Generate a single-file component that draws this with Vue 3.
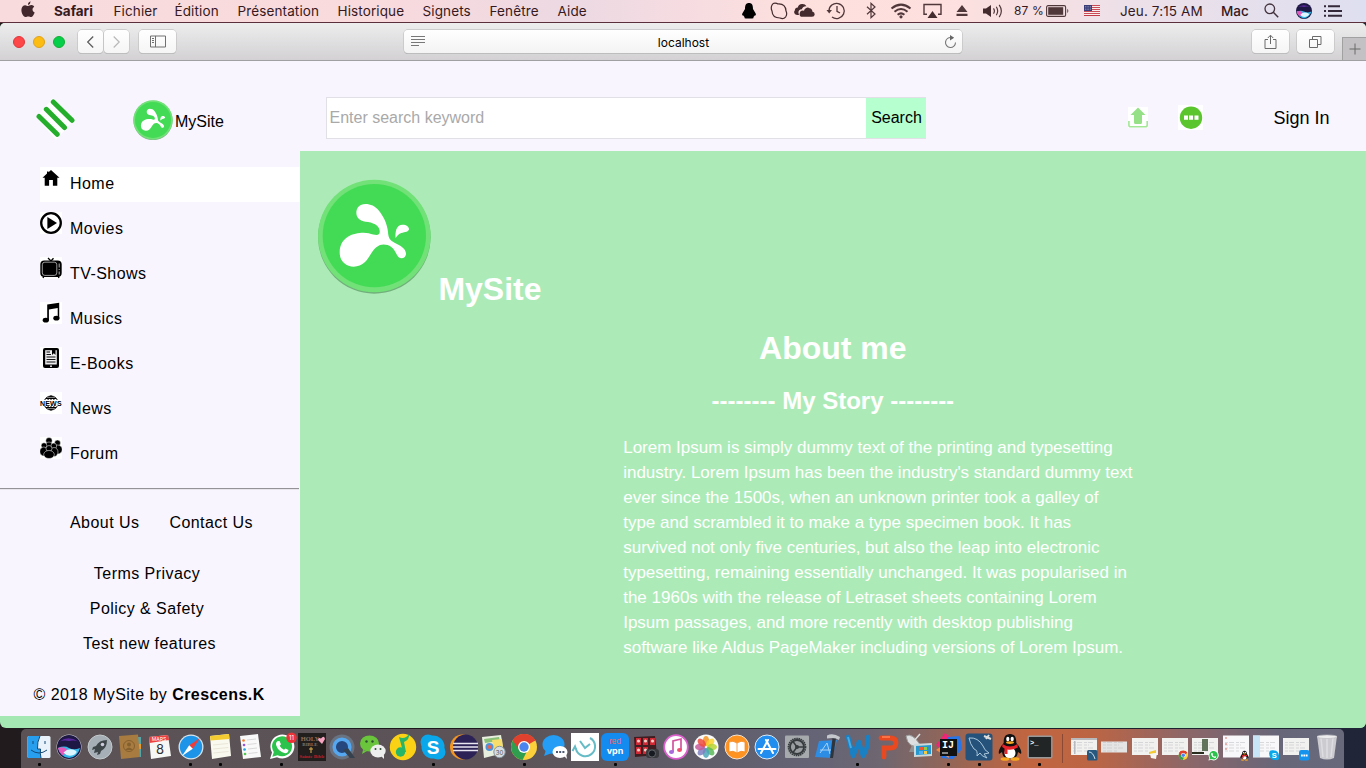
<script setup>
const menus = [
  ['Fichier', 61], ['Édition', 63], ['Présentation', 100], ['Historique', 85],
  ['Signets', 67], ['Fenêtre', 68], ['Aide', 40]
]
const links = ['Home', 'Movies', 'TV-Shows', 'Musics', 'E-Books', 'News', 'Forum']
const story = [
  'Lorem Ipsum is simply dummy text of the printing and typesetting',
  "industry. Lorem Ipsum has been the industry's standard dummy text",
  'ever since the 1500s, when an unknown printer took a galley of',
  'type and scrambled it to make a type specimen book. It has',
  'survived not only five centuries, but also the leap into electronic',
  'typesetting, remaining essentially unchanged. It was popularised in',
  'the 1960s with the release of Letraset sheets containing Lorem',
  'Ipsum passages, and more recently with desktop publishing',
  'software like Aldus PageMaker including versions of Lorem Ipsum.'
]
const petals = ['#f7941e', '#fbd12c', '#b6d433', '#58b958', '#4aa6b8', '#7d7fc0', '#c65a9b', '#ee4b3e']
</script>

<template>
  <div class="desktop">
    <svg class="defs" width="0" height="0">
      <symbol id="splash" viewBox="50 88 344 346">
        <circle cx="222" cy="263" r="169" fill="#5e9a68" opacity=".75" />
        <circle cx="222" cy="259" r="169" fill="#71e178" />
        <circle cx="222" cy="258" r="155" fill="#43db55" />
        <path fill="#fff" d="M195 163C178 163 168 175 168 189C168 208 183 215 203 217C228 221 240 234 238 248C237 259 226 257 205 251C180 246 118 252 118 309C118 336 138 351 160 351C187 351 200 333 211 314C226 289 240 280 262 286C284 294 285 312 295 323C303 330 318 325 317 311C315 295 300 288 284 280C266 270 264 262 263 246C260 220 248 198 236 183C224 169 211 163 195 163Z" />
        <path fill="#fff" d="M286 266C284 248 287 225 307 225C318 225 326 231 326 238C326 246 314 247 303 250C293 254 289 260 286 266Z" />
      </symbol>
      <symbol id="chrome" viewBox="0 0 26 26">
        <circle cx="13" cy="13" r="13" fill="#fbd03b" />
        <path d="M13 13L1.7 6.6A13 13 0 0 1 24.3 6.6Z" fill="#e0412f" />
        <path d="M13 13L1.7 6.6A13 13 0 0 0 11.6 25.9L17 15Z" fill="#2f9e4f" />
        <path d="M13 7H24.5A13 13 0 0 0 1.7 6.6L7.5 15Z" fill="#e0412f" />
        <circle cx="13" cy="13" r="6" fill="#fff" /><circle cx="13" cy="13" r="4.7" fill="#4a84ee" />
      </symbol>
      <symbol id="penguin" viewBox="0 0 24 28">
        <path d="M12 1C7 1 5.5 5 5.7 10C2 14 0 18 1 21L4 19C5 25 8 26 12 26S19 25 20 19L23 21C24 18 22 14 18.3 10C18.5 5 17 1 12 1Z" fill="#111" />
        <ellipse cx="12" cy="20" rx="5.5" ry="5.5" fill="#fff" /><ellipse cx="9.8" cy="6" rx="1.6" ry="2.2" fill="#fff" /><ellipse cx="14.2" cy="6" rx="1.6" ry="2.2" fill="#fff" />
        <ellipse cx="12" cy="9.6" rx="4" ry="1.4" fill="#f5a623" /><path d="M4.5 11Q12 16 19.5 11L19.8 14.5Q14 17.5 9.5 16.5V21H6.5V15.6L4.2 14Z" fill="#e8242b" />
        <ellipse cx="7" cy="26" rx="4.5" ry="1.8" fill="#f5a623" /><ellipse cx="17" cy="26" rx="4.5" ry="1.8" fill="#f5a623" />
      </symbol>
      <symbol id="siri" viewBox="0 0 26 26">
        <circle cx="13" cy="13" r="13" fill="#1d1844" />
        <path d="M3 7Q12 0 23 7Q18 5 13 6.5Q8 5 3 7Z" fill="#5b2a9e" />
        <path d="M1 14Q8 11 13 14T25 14Q22 24 13 25Q4 24 1 14Z" fill="#33b7e8" />
        <path d="M1 14Q7 12 10 15T6 22Q2 19 1 14Z" fill="#e557ba" />
        <path d="M7 19Q12 14 18 16T19 21Q12 25 7 19Z" fill="#dcf6ff" />
      </symbol>
      <symbol id="whats" viewBox="0 0 26 26">
        <path d="M1 25L3 18.5A12 12 0 1 1 8 23.2Z" fill="#fff" /><path d="M3.3 22.7L4.8 18A10 10 0 1 1 8.6 21.3Z" fill="#2bc34b" />
        <path d="M8.2 7.2L10.5 7L12 10.2L10.7 11.7Q12 14.5 15 15.8L16.5 14.4L19.5 16Q19 19.3 16 19.2Q9 17.8 7 10.8Q6.5 8.7 8.2 7.2Z" fill="#fff" />
      </symbol>
      <symbol id="skype" viewBox="0 0 26 26">
        <circle cx="8" cy="8" r="7.5" fill="#0aa7ea" /><circle cx="18" cy="18" r="7.5" fill="#0aa7ea" /><circle cx="13" cy="13" r="11.5" fill="#0aa7ea" />
      </symbol>
    </svg>

    <header class="menubar">
      <svg class="apple" width="14" height="17" viewBox="0 0 14 17"><path d="M9.6.3Q9.7 3 7 4Q6.7 1.4 9.6.3ZM7 5C8 5 9 4 10.5 4.1C11.8 4.2 12.7 4.8 13.2 5.7C10.8 7.2 11 10.3 13.7 11.4C12.7 14 11.4 16 10.2 16C9 16 8.5 15.4 7.3 15.4S5.5 16 4.4 16C2.3 16 .3 12 .4 8.8C.5 6 2.2 4.2 4.2 4.2C5.5 4.2 6.2 5 7 5Z" fill="#42282c" /></svg>
      <b class="app-name">Safari</b>
      <span v-for="m in menus" :key="m[0]" class="menu" :style="{ width: m[1] + 'px' }">{{ m[0] }}</span>
      <div class="status">
        <svg width="16" height="17" viewBox="0 0 16 17"><path d="M8 1C5 1 4 3 4 7L1.3 11.5Q.5 14 2.3 13.5L3.5 15Q3 16.5 5 16.5H11Q13 16.5 12.5 15L13.7 13.5Q15.5 14 14.7 11.5L12 7C12 3 11 1 8 1Z" fill="#000" /></svg>
        <svg class="s-skype" width="18" height="18" viewBox="0 0 18 18"><path d="M5 1.2Q7 1.2 8 2Q15.4 1.5 16 9Q17.5 12 15.7 14.8Q13.5 17.5 10 16Q2.3 16 2 9Q.5 6 2 3Q3 1.2 5 1.2Z" fill="none" stroke="#442b2e" stroke-width="1.2" /></svg>
        <svg class="s-cloud" width="21" height="15" viewBox="0 0 21 15"><path d="M3 12H5L4.4 9.5Q4.4 6.5 7.8 6.2Q9 3 12.5 3.3Q11 .7 8 1Q4.5 1.2 3.8 4.5Q1 4.5.8 7.6Q0 8.2.2 9.8Q.5 11.6 3 12ZM7.2 13.8H18Q20.5 13.5 20.7 11.4Q20.7 9 18.5 8.7Q18 5.5 15.6 5.3Q13.8 4 11.8 5.2Q10.3 6 10 7.7Q6.4 7 5.8 9.8Q5 13 7.2 13.8Z" fill="#442b2e" /></svg>
        <svg class="s-time" width="20" height="18" viewBox="0 0 20 18"><path d="M3 9A7.6 7.6 0 1 1 6 15M11 4V9.3L14 11" fill="none" stroke="#50373a" stroke-width="1.3" /><path d="M.5 8H6L3.2 11.5Z" fill="#50373a" /></svg>
        <svg class="s-bt" width="12" height="17" viewBox="0 0 12 17"><path d="M2 4.8L10 12L6 15.7V1.3L10 5L2 12.2" fill="none" stroke="#50373a" stroke-width="1.2" /></svg>
        <svg class="s-wifi" width="22" height="16" viewBox="0 0 22 16"><path d="M1.5 5.5Q11-2.3 20.5 5.5M4.5 8.7Q11 3.4 17.5 8.7M7.6 11.8Q11 9 14.4 11.8" fill="none" stroke="#50373a" stroke-width="2" /><circle cx="11" cy="13.8" r="1.6" fill="#50373a" /></svg>
        <svg class="s-air" width="19" height="16" viewBox="0 0 19 16"><path d="M4 11.3H1V1.5H18V11.3H15" fill="none" stroke="#50373a" stroke-width="1.4" /><path d="M9.5 8L14.5 15H4.5Z" fill="#442b2e" /></svg>
        <svg class="s-eject" width="12" height="12" viewBox="0 0 12 12"><path d="M6 0L11.5 7H.5ZM.5 8.8H11.5V11H.5Z" fill="#50373a" /></svg>
        <svg class="s-vol" width="22" height="16" viewBox="0 0 22 16"><path d="M1 5.5H4L9 2V14L4 10.5H1Z" fill="#442b2e" /><path d="M11.5 5.4Q13.3 8 11.5 10.6M14.3 3.7Q17 8 14.3 12.3M17.2 1.8Q21.5 8 17.2 14.2" fill="none" stroke="#50373a" stroke-width="1.2" /></svg>
        <span class="pct">87 %</span>
        <svg class="s-bat" width="24" height="12" viewBox="0 0 24 12"><rect x=".6" y=".6" width="19" height="10.8" rx="1.5" fill="none" stroke="#50373a" stroke-width="1.1" /><rect x="2.2" y="2.2" width="15" height="7.6" fill="#50373a" /><path d="M21.3 3.8Q23.3 6 21.3 8.2Z" fill="#50373a" /></svg>
        <svg class="s-flag" width="16" height="11" viewBox="0 0 16 11"><path fill="#fff" d="M0 0h16v11H0z" /><path d="M0 .6H16M0 2.6H16M0 4.6H16M0 6.6H16M0 8.6H16M0 10.5H16" stroke="#c33945" /><path fill="#3a3d78" d="M0 0h8v6H0z" /><path d="M1 1.5H7M1 3H7M1 4.5H7" stroke="#b9bad5" stroke-width=".6" stroke-dasharray=".8 .9" /></svg>
        <span class="clock">Jeu. 7:15 AM</span>
        <span class="user">Mac</span>
        <svg class="s-find" width="15" height="15" viewBox="0 0 15 15"><circle cx="5.8" cy="5.8" r="4.8" fill="none" stroke="#42333e" stroke-width="1.3" /><path d="M9.3 9.3L14.2 14.2" stroke="#42333e" stroke-width="1.5" /></svg>
        <svg class="s-siri" width="16" height="16"><use href="#siri" /></svg>
        <svg class="s-list" width="18" height="12" viewBox="0 0 18 12"><path d="M0 1.3H2M0 6H2M0 10.7H2M4 1.3H16M4 6H18M4 10.7H18" stroke="#33293a" stroke-width="2" /></svg>
      </div>
    </header>

    <main class="window">
      <div class="toolbar">
        <i class="light red"></i><i class="light amber"></i><i class="light green"></i>
        <span class="btn back"><svg width="9" height="14" viewBox="0 0 9 14"><path d="M7.2 1.5L1.7 7L7.2 12.5" fill="none" stroke="#5e5e5e" stroke-width="1.3" /></svg></span>
        <span class="btn next"><svg width="9" height="14" viewBox="0 0 9 14"><path d="M1.7 1.5L7.2 7L1.7 12.5" fill="none" stroke="#b9b9b9" stroke-width="1.2" /></svg></span>
        <span class="btn side"><svg width="16" height="13" viewBox="0 0 16 13"><path d="M.5 1H15.5V12H.5ZM5.5 1V12M2 3.5H4M2 5.5H4M2 7.5H4" fill="none" stroke="#707070" /></svg></span>
        <div class="address">
          <svg width="14" height="11" viewBox="0 0 14 11"><path d="M0 .5H14M0 3.5H14M0 6.5H14M0 9.5H8" stroke="#777" /></svg>
          <span>localhost</span>
          <svg width="13" height="14" viewBox="0 0 13 14"><path d="M7.5 2.6A5 5 0 1 0 11.5 7.5" fill="none" stroke="#777" stroke-width="1.1" /><path d="M6 0L10.2 2.8L6 5.5Z" fill="#666" /></svg>
        </div>
        <span class="btn share"><svg width="13" height="16" viewBox="0 0 13 16"><path d="M4 5.5H1V14.5H12V5.5H9M6.5 10V1.5M3.8 4L6.5 1.2L9.2 4" fill="none" stroke="#6a6a6a" /></svg></span>
        <span class="btn tabs"><svg width="13" height="13" viewBox="0 0 13 13"><path d="M.5 4.5H8.5V12.5H.5ZM3.5 4.5V1.5H12V9.5H8.5" fill="none" stroke="#6a6a6a" /></svg></span>
        <span class="plus"><svg width="12" height="12" viewBox="0 0 12 12"><path d="M6 .5V11.5M.5 6H11.5" stroke="#6a6a6a" /></svg></span>
      </div>

      <div class="site-head">
        <svg class="burger" width="40" height="42" viewBox="0 0 40 42"><path d="M17 0L39 21L20 42L0 19Z" fill="#fff" opacity=".85" /><path d="M17.3 4L36 22.3M10.3 11.3L28.5 29.5M3 18.5L21.2 36.3" stroke="#25ae2b" stroke-width="5" stroke-linecap="round" /></svg>
        <svg class="logo" width="40" height="40.5"><use href="#splash" /></svg>
        <span class="brand">MySite</span>
        <div class="search"><span class="field">Enter search keyword</span><span class="go">Search</span></div>
        <svg class="upload" width="20" height="21" viewBox="0 0 20 21"><path fill="#fff" d="M0 0h20v21H0z" /><path d="M10 .6L17.5 8H14V15.5Q14 17 12.5 17H7.5Q6 17 6 15.5V8H2.5Z" fill="#96e187" /><path d="M.9 14V18Q.9 19.8 2.5 19.8H17.5Q19.2 19.8 19.2 18V14" fill="none" stroke="#a4e698" stroke-width="1.6" /></svg>
        <svg class="more" width="25" height="25" viewBox="0 0 25 25"><path fill="#fff" d="M0 0h25v25H0z" /><circle cx="13" cy="12.7" r="11.2" fill="#5bc52e" /><path fill="#fff" d="M6 10.5h4v4.2H6zM11 10.5h4v4.2h-4zM16.5 10.5h4v4.2h-4z" /></svg>
        <span class="signin">Sign In</span>
      </div>

      <div class="page">
        <aside>
          <nav>
            <a v-for="(l, i) in links" :key="l" :class="{ active: i === 0 }">
              <svg width="22" height="22" viewBox="0 0 22 22">
                <path v-if="i" fill="#fff" d="M0 0h22v22H0z" />
                <path v-if="i === 0" d="M11 3L19.5 10.7H17.3V18.8H12.9V13H9.1V18.8H4.7V10.7H2.5L7 6.5V4.5H8.5V5.3Z" />
                <g v-if="i === 1"><circle cx="11" cy="11" r="9.8" fill="none" stroke="#000" stroke-width="2.3" /><path d="M7.4 5V17L17 11Z" /></g>
                <g v-if="i === 2"><path d="M8 1L11 4L13.5 1.2M4 19L3 21M18 19L19 21" fill="none" stroke="#000" stroke-width="1.3" /><rect x=".3" y="3.5" width="21.4" height="16.5" rx="4" /><rect x="2.3" y="5.2" width="14.5" height="13.2" rx="2.5" fill="none" stroke="#fff" stroke-width=".6" /><path d="M19.2 6.5V17.5" stroke="#fff" stroke-width=".7" stroke-dasharray="4 1.5 1 1.5" /></g>
                <g v-if="i === 3"><path d="M7.2 2.5L19.2.8V16H17.7V6L8.9 7.5V18H7.2Z" /><ellipse cx="5.8" cy="18.2" rx="3.1" ry="2.4" /><ellipse cx="16.4" cy="16.2" rx="3.1" ry="2.4" /></g>
                <g v-if="i === 4"><rect x="3" y="1" width="16" height="20" rx="2" /><path d="M5.2 3.2H16.8V17.5H5.2Z" fill="#eee" /><path d="M6.5 5H10M6.5 7.5H11M6.5 10H15.5M6.5 12.5H15.5M6.5 15H15.5" stroke="#111" stroke-width="1.2" /><path d="M12 1H15.5V8L13.8 6.3L12 8Z" /><circle cx="11" cy="19.2" r=".9" fill="#fff" /></g>
                <g v-if="i === 5"><circle cx="11" cy="11" r="7" fill="none" stroke="#000" /><ellipse cx="11" cy="11" rx="3.4" ry="7" fill="none" stroke="#000" /><path d="M11 4V18M6 6.5H16M6 15.5H16" stroke="#000" /><path fill="#fff" d="M0 8h22v6H0z" /><text x="11" y="13.5" text-anchor="middle" textLength="22" font-family="Liberation Sans,sans-serif" font-weight="bold" font-size="7">NEWS</text></g>
                <g v-if="i === 6" stroke="#fff" stroke-width=".5"><circle cx="9" cy="3.7" r="3.2" /><circle cx="17.5" cy="6" r="3" /><ellipse cx="17.8" cy="12.5" rx="4.4" ry="4.5" /><ellipse cx="9" cy="10" rx="4" ry="5" /><circle cx="4" cy="8.5" r="2.8" /><ellipse cx="3.8" cy="14.5" rx="4" ry="4.5" /><circle cx="13.8" cy="9" r="2.9" /><ellipse cx="14" cy="15" rx="4" ry="4.5" /><circle cx="9" cy="11.5" r="3" /><ellipse cx="9" cy="17.5" rx="5.3" ry="4" /></g>
              </svg>
              <span>{{ l }}</span>
            </a>
          </nav>
          <hr>
          <div class="pair"><span>About Us</span><span>Contact Us</span></div>
          <div class="legal"><span>Terms Privacy</span><span>Policy &amp; Safety</span><span class="feat">Test new features</span></div>
          <p class="copy">© 2018 MySite by <b>Crescens.K</b></p>
        </aside>
        <section>
          <div class="hero"><svg width="114.7" height="115.3"><use href="#splash" /></svg><h1>MySite</h1></div>
          <h1 class="about">About me</h1>
          <h2>-------- My Story --------</h2>
          <p class="story"><span v-for="s in story" :key="s">{{ s }}</span></p>
        </section>
      </div>
    </main>

    <footer class="dock">
      <div class="slot on"><svg viewBox="0 0 30 30"><rect x="3.5" y="4" width="23" height="22" rx="1.5" fill="#e9f2fa" /><path d="M5 4H16Q13 10 13.5 17H16.5Q16 22 17 26H5Q3.5 26 3.5 24.5V5.5Q3.5 4 5 4Z" fill="#279fee" /><path d="M9 9V12M21 9V12M7 18Q15 24 23 18M16 4Q13 10 13.5 17H16.5Q16 22 17 26" fill="none" stroke="#134976" /></svg></div>
      <div class="slot"><svg viewBox="0 0 30 30"><circle cx="15" cy="15" r="12.5" fill="#c7c4cc" /><use href="#siri" x="3" y="3" width="24" height="24" /></svg></div>
      <div class="slot"><svg viewBox="0 0 30 30"><circle cx="15" cy="15" r="12" fill="#a5afb5" stroke="#c3c9cc" /><path d="M22 8Q14 8 11 14L8 15L7 18L10 17L9 21L13 20L12 23L15 22L16 19Q22 16 22 8Z" fill="#3f464a" /><circle cx="17.5" cy="12.5" r="1.8" fill="#ccd" /></svg></div>
      <div class="slot"><svg viewBox="0 0 30 30"><path d="M21 5H26V25H21Z" fill="#54a6ab" /><path d="M23 12H26V17H23Z" fill="#e69b35" /><path d="M4 4L23 2.5L25 25L6 27Z" fill="#a87b40" /><circle cx="14" cy="14" r="5.5" fill="none" stroke="#84602e" /><path d="M10 18Q14 13 18 18" fill="#84602e" /><circle cx="14" cy="12.5" r="2" fill="#84602e" /></svg></div>
      <div class="slot"><svg viewBox="0 0 30 30"><path d="M4 5L23 3L26 24L6 27Z" fill="#f7f7f5" /><path d="M4 5L23 3L24 8L4.5 11Z" fill="#ee4141" /><text x="14" y="9" text-anchor="middle" font-family="Inter,sans-serif" font-size="5" fill="#fff">MARS</text><text x="15" y="22" text-anchor="middle" font-family="Inter,sans-serif" font-size="13" fill="#333">8</text></svg></div>
      <div class="slot on"><svg viewBox="0 0 30 30"><circle cx="15" cy="15" r="12.5" fill="#d9e4ec" /><circle cx="15" cy="15" r="11.2" fill="#1d94e7" /><path d="M24 6L16.8 16.8L13.2 13.2Z" fill="#f13b36" /><path d="M6 24L16.8 16.8L13.2 13.2Z" fill="#fff" /></svg></div>
      <div class="slot on"><svg viewBox="0 0 30 30"><path d="M4 4L23 2L25 24L6 27Z" fill="#faf9ef" /><path d="M4 4L23 2L23.5 7L4.5 8.5Z" fill="#f4cc31" /><path d="M7 13L22 11.5M7.3 17L22.3 15.5M7.5 21L22.5 19.5" stroke="#ddd9c9" stroke-width=".6" /></svg></div>
      <div class="slot"><svg viewBox="0 0 30 30"><path d="M4 4L22 2L25 25L7 27Z" fill="#f9f9f9" /><g stroke-width="2.6" stroke-linecap="round"><path d="M7.5 8.5h.1" stroke="#f57d31" /><path d="M8 13h.1" stroke="#9756d8" /><path d="M8.5 17.5h.1" stroke="#23a4e5" /><path d="M9 22h.1" stroke="#52c852" /></g><path d="M11 8L20 7M11.5 12.5L20.5 11.5M12 17L21 16M12.5 21.5L21.5 20.5" stroke="#ccc" stroke-width=".7" /></svg></div>
      <div class="slot on"><svg viewBox="0 0 30 30"><use href="#whats" x="2" y="2" width="26" height="26" /><circle cx="24.5" cy="5.8" r="5.2" fill="#ee3037" /><text x="24.5" y="8" text-anchor="middle" font-family="Inter,sans-serif" font-size="6" fill="#fff">11</text></svg></div>
      <div class="slot"><svg viewBox="0 0 30 30"><path fill="#231e1e" d="M1 1h28v28H1z" /><g text-anchor="middle" font-family="Liberation Serif,serif" font-weight="bold"><text x="13" y="8.5" font-size="6.5" fill="#8c715b">HOLY</text><text x="13" y="14" font-size="5" fill="#8c715b">BIBLE</text><text x="15" y="26" font-size="5" fill="#bd202a">Sainte Bible</text></g><path d="M14 15V21M12 17H16" stroke="#dbaf4c" /><path d="M25 12L21 8Q21 5 24 6.5Q27 3 28 7Z" fill="#f7a4c0" /></svg></div>
      <div class="slot"><svg viewBox="0 0 30 30"><circle cx="15" cy="15" r="12.5" fill="#697280" /><circle cx="15" cy="15" r="7.8" fill="#25477d" stroke="#55a8ef" stroke-width="3.5" /><path d="M16 18L23 26H28L21 16Z" fill="#36414e" /></svg></div>
      <div class="slot"><svg viewBox="0 0 30 30"><ellipse cx="11.5" cy="11.5" rx="9.5" ry="8" fill="#6ac53d" /><path d="M5 18L4 22L9 19Z" fill="#6ac53d" /><ellipse cx="20" cy="19" rx="7.7" ry="6.5" fill="#eee" /><path d="M23 24L26 27V23Z" fill="#eee" /><g fill="#2f5134"><circle cx="8.5" cy="9.5" r="1.2" /><circle cx="14.5" cy="9.5" r="1.2" /><circle cx="17.5" cy="17" r="1" /><circle cx="22.5" cy="17" r="1" /></g></svg></div>
      <div class="slot"><svg viewBox="0 0 30 30"><circle cx="15" cy="15" r="13.2" fill="#fbd116" /><circle cx="12.5" cy="20" r="4.7" fill="#27b568" /><path d="M15.2 20L11 5Q17 8 21 2Q22 7 16 10L18 20Z" fill="#27b568" /></svg></div>
      <div class="slot on"><svg viewBox="0 0 30 30"><use href="#skype" x="2" y="2" width="26" height="26" /><text x="15" y="22" text-anchor="middle" fill="#fff" font-family="Liberation Sans,sans-serif" font-weight="bold" font-size="19">S</text></svg></div>
      <div class="slot"><svg viewBox="0 0 30 30"><circle cx="13.5" cy="15" r="12.5" fill="#f39522" /><circle cx="16.5" cy="15" r="12.5" fill="#2d2255" /><path d="M4 11.5H29M4 15H29M4 18.5H29" stroke="#e9e6f1" stroke-width="1.3" /></svg></div>
      <div class="slot"><svg viewBox="0 0 30 30"><path d="M3 5L22 3L25 21L5 26Z" fill="#e9efdf" /><path d="M5 7L20 5L21 9L6 11Z" fill="#8ac078" /><path d="M13 8L23 7L24 18L15 19Z" fill="#f7dd69" /><circle cx="10.5" cy="15" r="4" fill="#5092da" /><circle cx="10.5" cy="15" r="2" fill="#e46753" /><circle cx="20.5" cy="20" r="5.7" fill="#d6dde1" stroke="#85949d" /><text x="20.5" y="22.5" text-anchor="middle" font-family="Inter,sans-serif" font-size="6" fill="#555">30</text></svg></div>
      <div class="slot on"><svg viewBox="0 0 30 30"><use href="#chrome" x="2" y="2" width="26" height="26" /></svg></div>
      <div class="slot"><svg viewBox="0 0 30 30"><ellipse cx="13.5" cy="12.5" rx="11" ry="9.5" fill="#239df5" /><path d="M6 18L4 24L12 21Z" fill="#239df5" /><ellipse cx="20" cy="20" rx="7.5" ry="6" fill="#fff" /><path d="M24 24L27 27L26 21Z" fill="#fff" /><path d="M16 20H24.5" stroke="#4c5a74" stroke-width="2" stroke-dasharray="2 1.2" /></svg></div>
      <div class="slot"><svg viewBox="0 0 30 30"><path fill="#fff" d="M1 1h28v28H1z" /><path d="M6 17A9.7 9.7 0 1 0 20 6M7 20L5 14.5L2.5 19" fill="none" stroke="#65bcc6" stroke-width="2" /><path d="M10 9L15 16L20 12" fill="none" stroke="#65bcc6" stroke-width="2" /></svg></div>
      <div class="slot on"><svg viewBox="0 0 30 30"><rect x="1" y="1" width="28" height="28" rx="6" fill="#148bee" /><text x="15" y="11.5" text-anchor="middle" font-family="Inter,sans-serif" font-size="7.5" fill="#ff686e">red</text><text x="15" y="21.5" text-anchor="middle" font-family="Inter,sans-serif" font-size="9" font-weight="bold" fill="#fff">vpn</text></svg></div>
      <div class="slot"><svg viewBox="0 0 30 30"><path d="M3 5L24 4L26 23L4 25Z" fill="#401d20" /><g fill="#cf2936"><path d="M5 6h5v7H5zM12 6h5v7h-5zM19 6h5v7h-5zM5 15h5v7H5zM12 15h5v7h-5z" /></g><g fill="#f0d0c7"><circle cx="7.5" cy="9" r="1.6" /><circle cx="14.5" cy="9" r="1.6" /><circle cx="21.5" cy="9" r="1.6" /><circle cx="7.5" cy="18" r="1.6" /><circle cx="14.5" cy="18" r="1.6" /></g><rect x="15" y="17" width="13" height="9" rx="3" fill="#383a3e" /><circle cx="21" cy="21.5" r="3.6" fill="#171b21" stroke="#62656a" /></svg></div>
      <div class="slot"><svg viewBox="0 0 30 30"><circle cx="15" cy="15" r="11.8" fill="#fff" stroke="#dc60ce" stroke-width="1.8" /><path d="M12 20V9L20 7V18" fill="none" stroke="#d2559f" stroke-width="1.7" /><ellipse cx="10.5" cy="20" rx="2.5" ry="2" fill="#a86cdf" /><ellipse cx="18.5" cy="18" rx="2.5" ry="2" fill="#f04f72" /></svg></div>
      <div class="slot"><svg viewBox="0 0 30 30"><circle cx="15" cy="15" r="12.5" fill="#fafafa" /><ellipse v-for="(c, i) in petals" :key="c" cx="15" cy="9" rx="3.2" ry="5" :fill="c" opacity=".85" :transform="`rotate(${i * 45} 15 15)`" /></svg></div>
      <div class="slot"><svg viewBox="0 0 30 30"><circle cx="15" cy="15" r="12" fill="#ff9322" stroke="#f5e3d1" /><path d="M15 11Q11 8 7 10V20Q11 18 15 21Q19 18 23 20V10Q19 8 15 11ZM15 11V21" fill="#fff" stroke="#f58a21" stroke-width=".8" /></svg></div>
      <div class="slot"><svg viewBox="0 0 30 30"><circle cx="15" cy="15" r="12" fill="#218eef" stroke="#dceaf7" /><path d="M9 21L16 8M14 8L21 21M6.5 17H23.5" stroke="#fff" stroke-width="2" stroke-linecap="round" /></svg></div>
      <div class="slot"><svg viewBox="0 0 30 30"><rect x="3" y="3.5" width="24" height="22.5" rx="1" fill="#a6aaac" /><circle cx="15" cy="15" r="8.6" fill="#808588" stroke="#363b3e" stroke-width="1.5" stroke-dasharray="1.5 .7" /><circle cx="15" cy="15" r="7" fill="#9a9ea0" stroke="#363b3e" stroke-width="1.8" /><path d="M15 15H21M15 15L11 9.5M15 15L11 20.5" stroke="#363b3e" stroke-width="1.5" /><circle cx="15" cy="15" r="2" fill="#363b3e" /></svg></div>
      <div class="slot"><svg viewBox="0 0 30 30"><path d="M6 9L24 8L19 26L2 25Z" fill="#2d8ce3" /><path d="M7 21L14 11L17 22M7 18H18" fill="none" stroke="#a7d3f7" /><path d="M19.5 6L23 6L20 26H17Z" fill="#30353b" /><path d="M14 3.5Q20 .5 27 5L26 8Q22 5 14 6.5Z" fill="#c4c8cc" /></svg></div>
      <div class="slot on"><svg viewBox="0 0 30 30"><path d="M5 5L10 24L16 10L20 24Q25 17 25 5" fill="none" stroke="#1980c4" stroke-width="4.5" stroke-linecap="round" stroke-linejoin="round" /><path d="M5 5L8 16" stroke="#45abe4" stroke-width="2" /></svg></div>
      <div class="slot"><svg viewBox="0 0 30 30"><path d="M8 6H17Q23 6 23 11T17 16H11V25" fill="none" stroke="#e84920" stroke-width="4.8" stroke-linecap="round" /><path d="M9 5H17" stroke="#ff8254" stroke-width="1.5" /></svg></div>
      <div class="slot"><svg viewBox="0 0 30 30"><path d="M9 11L5 20H14Z" fill="#929292" /><path d="M2 4Q8 0 17 14Q4 17 2 4Z" fill="#dedfe0" stroke="#999" /><path d="M9 10L16 2" stroke="#ddd" stroke-width="1.5" /><path d="M10 12L28 11V24L10 25Z" fill="#ccd9dc" /><path d="M12 14L27 13V22L12 23Z" fill="#2597cc" /><path d="M15 15H19V18H15Z" fill="#ef5633" /><path d="M20 15H23V18H20Z" fill="#8dcc49" /><path d="M15 19H19V22H15Z" fill="#4fb0f4" /><path d="M20 19H23V22H20Z" fill="#f6cb3f" /></svg></div>
      <div class="slot on"><svg viewBox="0 0 30 30"><path d="M2 13L11 1L19 7L13 23Z" fill="#ef2575" /><path d="M14 5L26 4L28 17L19 27L7 26Z" fill="#2775e9" /><path d="M2 18L13 10L15 26Z" fill="#f38a43" /><path fill="#111" d="M6 7h17v17H6z" /><text x="8" y="16" font-family="Liberation Mono,monospace" font-size="10" font-weight="bold" fill="#fff">IJ</text><path d="M8 21H14" stroke="#fff" /></svg></div>
      <div class="slot on"><svg viewBox="0 0 30 30"><rect x="1.5" y="1.5" width="27" height="27" rx="3" fill="#24527a" /><path d="M5 6Q14 5 19 14Q20 18 25 21L20 22L23 26Q17 24 16 21L13 24Q14 18 10 17Q6 12 5 6Z" fill="none" stroke="#abc8dc" /><path d="M20 4L27 7M22 7L25 3" stroke="#ddd" stroke-width="2" /></svg></div>
      <div class="slot on"><svg viewBox="0 0 30 30"><use href="#penguin" x="3" y="1" width="24" height="28" /></svg></div>
      <div class="slot on"><svg viewBox="0 0 30 30"><rect x="3.2" y="4.2" width="23.6" height="21.6" rx="1" fill="#222526" stroke="#999" stroke-width="1.4" /><text x="5" y="13" font-family="Liberation Mono,monospace" font-size="7" font-weight="bold" fill="#fff">&gt;_</text></svg></div>
      <i class="sep"></i>
      <div v-for="n in 8" :key="n" class="slot"><svg viewBox="0 0 30 30">
        <path v-if="n === 2" fill="#e4e4e4" d="M2 9.5h26v11H2z" />
        <path v-else-if="n === 6 || n === 7" fill="#f8f8fa" d="M2 3.5h26v22H2z" />
        <path v-else fill="#f1f1f0" d="M2 6h26v17H2z" />
        <path d="M4 10.5H25M4 13H20M4 16H24M4 19H19" stroke="#c3c4c8" stroke-width=".6" stroke-dasharray="3 1 5 2" />
        <g v-if="n === 1"><path fill="#b9babe" d="M2 6h26v2H2zM5 9h1.5v13H5z" /><rect x="18" y="18" width="10.5" height="10.5" rx="1.5" fill="#28587e" /><path d="M20 20Q24 20 26 27" fill="none" stroke="#cde" /></g>
        <g v-if="n === 3"><path d="M19 20L26 18V21L19 22Z" fill="#f3ca32" /><path d="M20 22L27 21L26 27L21 26Z" fill="#f7f6ee" /></g>
        <use v-if="n === 4" href="#chrome" x="18.5" y="18.5" width="9.5" height="9.5" />
        <g v-if="n === 5"><path d="M12 7H18V19H12Z" fill="#62735b" /><path d="M2 20H14V22H2Z" fill="#282c1d" /><use href="#whats" x="18" y="18" width="11" height="11" /></g>
        <g v-if="n === 6"><path d="M4 6H6M4 12H6M4 17H6" stroke="#e17368" /><use href="#penguin" x="19" y="18" width="9" height="11" /></g>
        <g v-if="n === 7"><path d="M2 3.5H9V25H2Z" fill="#c8e5f7" /><use href="#skype" x="18" y="18" width="10.5" height="10.5" /><text x="23.2" y="26" text-anchor="middle" fill="#fff" font-family="Liberation Sans,sans-serif" font-weight="bold" font-size="7.5">S</text></g>
        <g v-if="n === 8"><rect x="18" y="18" width="10.5" height="10.5" rx="2.3" fill="#1593ed" /><path d="M20 23.5H27" stroke="#fff" stroke-width="2" stroke-dasharray="1.8 .6" /></g>
      </svg></div>
      <div class="slot"><svg viewBox="0 0 30 30"><path d="M5 4H25L22 26Q15 29 8 26Z" fill="#d3d3d6" opacity=".93" /><path d="M9 6L11 25M15 6V26M21 6L19 25" stroke="#dedee2" stroke-width="1.5" /><ellipse cx="15" cy="4.7" rx="10" ry="1.8" fill="#ededee" stroke="#b9b9bd" stroke-width=".6" /></svg></div>
    </footer>
  </div>
</template>

<style>
html, body { margin: 0; overflow: hidden; }
</style>

<style scoped>
* { box-sizing: border-box; }
svg { display: block; flex: none; }
.desktop { width: 1366px; height: 768px; display: flex; flex-direction: column; overflow: hidden; white-space: nowrap; font-family: "Liberation Sans", Arial, sans-serif; color: #000; background: linear-gradient(90deg, #211b1e, #1b1a1f 50%, #202638); }
.defs { position: absolute; }
.menubar { height: 23px; flex: none; display: flex; align-items: center; padding: 0 0 1px 21px; border-bottom: 1px solid #5b2f3b; background: linear-gradient(90deg, #f8dcdd 0, #f9dadd 28%, #ecd9e3 42%, #f6dce1 50%, #fee0dd 60%, #fde0df 70%, #eee0e8 82%, #dedff0 100%); font: 400 13.5px Inter, sans-serif; color: #35191e; }
.apple { margin-right: 19px; position: relative; top: -1px; }
.app-name { width: 59.5px; font-weight: 700; }
.menu { flex: none; letter-spacing: .12px; }
.status { display: flex; align-items: center; margin-left: auto; width: 625px; flex: none; }
.s-skype { margin-left: 13px; } .s-cloud { margin-left: 6px; } .s-time { margin-left: 11px; } .s-bt { margin-left: 19px; }
.s-wifi { margin-left: 13px; } .s-air { margin-left: 11px; } .s-eject { margin-left: 14px; } .s-vol { margin-left: 14px; }
.pct { font-size: 12px; width: 32px; margin-left: 10px; letter-spacing: .1px; } .s-bat { margin-left: 0; } .s-flag { margin-left: 14px; }
.clock { width: 101px; margin-left: 20px; letter-spacing: .12px; } .user { width: 43px; font-weight: 500; }
.s-siri { margin-left: 17px; } .s-list { margin-left: 12px; }
.window { height: 705px; flex: none; border-radius: 5px 5px 6px 6px; overflow: hidden; background: #a5e8b4; }
.toolbar { height: 38px; display: flex; align-items: center; padding-left: 13px; border-bottom: 1px solid #a09fa1; background: linear-gradient(#ededee, #d3d1d3); }
.light { width: 12px; height: 12px; border-radius: 50%; margin-right: 8px; flex: none; }
.red { background: #fc4648; border: 1px solid #e0353b; } .amber { background: #fdbc12; border: 1px solid #dfa21c; } .green { background: #05cf48; border: 1px solid #16ad36; }
.btn { height: 23px; flex: none; display: flex; align-items: center; justify-content: center; border-radius: 4px; background: linear-gradient(#fff, #f5f5f5); box-shadow: 0 0 0 .7px #c4c3c4, 0 1px 0 #b0afb0; }
.back { width: 25px; margin-left: 5px; } .next { width: 25px; margin-left: 1px; } .side { width: 37px; margin-left: 10px; }
.address { width: 558px; height: 23px; margin-left: 228px; padding: 0 5px 0 7px; display: flex; align-items: center; justify-content: space-between; flex: none; border-radius: 4px; background: linear-gradient(#fff, #f3f3f3); box-shadow: 0 0 0 .7px #c4c3c4, 0 1px 0 #aaa; font: 12px Inter, sans-serif; }
.address span { position: relative; left: -1px; top: 1px; }
.share { width: 37px; margin-left: 290px; } .tabs { width: 37px; margin-left: 8px; }
.plus { width: 24px; height: 23px; margin-left: 8px; align-self: flex-end; flex: none; display: flex; align-items: center; justify-content: center; background: #c3c1c3; border: solid #a2a1a2; border-width: 1px 0 0 1px; }
.site-head { height: 90px; background: #f8f5ff; display: flex; align-items: flex-start; padding: 36px 0 0 36px; font-size: 16px; }
.burger { margin-top: 1px; }
.logo { margin: 2.5px 2.5px 0 56.5px; }
.brand { line-height: 20px; margin-top: 15px; width: 150.5px; flex: none; }
.search { width: 600px; height: 42px; display: flex; border: 1px solid #e2e0e7; background: #fff; line-height: 40px; }
.field { width: 539px; padding-left: 3px; color: #a9a9a9; }
.go { flex: 1; margin-right: -1px; padding-left: 2px; background: #b6ffcf; text-align: center; }
.upload { margin: 10px 0 0 202px; } .more { margin: 8px 0 0 30px; }
.signin { margin: 11px 0 0 71px; font-size: 18px; line-height: 20px; }
.page { height: 577px; display: flex; }
aside { width: 300px; height: 565px; background: #f8f5ff; font-size: 16px; letter-spacing: .45px; }
nav { padding: 16px 0 0 40px; display: flex; flex-direction: column; gap: 10px; }
nav a { height: 35px; display: flex; }
nav a.active { background: #fff; }
nav span { line-height: 34px; margin-left: 8px; }
hr { margin: 16px 1px 0 0; border: 0; border-top: 1px solid #949297; border-bottom: 1px solid #e8e6ec; }
.pair { display: flex; gap: 30px; padding: 23px 0 0 70px; line-height: 20px; }
.legal { display: flex; flex-direction: column; align-items: center; padding-right: 6px; margin-top: 31px; line-height: 20px; gap: 15px; }
.feat { margin-left: 5px; }
.copy { margin: 31px 0 0 33.5px; line-height: 20px; }
section { flex: 1; background: #acebb7; color: #fff; padding: 28.3px 0 0 16.7px; }
h1, h2 { margin: 0; font-weight: bold; line-height: 36px; }
h1 { font-size: 32px; } h2 { font-size: 24px; text-align: center; margin-top: 17px; padding-right: 17px; }
.hero { display: flex; height: 128px; align-items: flex-start; }
.hero h1 { margin: 92px 0 0 7px; }
.about { text-align: center; margin-top: 23px; padding-right: 17px; }
.story { display: flex; flex-direction: column; width: 510px; margin: 16px 0 0 306.5px; font-size: 17px; line-height: 25px; }
.dock { width: 1323px; height: 39px; margin: 1px 0 0 21px; padding-left: 3px; flex: none; display: flex; border-radius: 5px 5px 0 0; background: linear-gradient(90deg, #5a5255 0, #5b5357 37%, #646476 60%, #6e6670 65%, #996553 71%, #c16540 76%, #bc6544 81%, #8d6668 88%, #676679 95%, #686a7c); }
.slot { width: 30.33px; height: 39px; flex: none; position: relative; padding-top: 3px; }
.slot svg { width: 30px; height: 30px; }
.slot.on::after { content: ""; position: absolute; left: 13.5px; bottom: 2px; width: 3px; height: 3px; border-radius: 1px; background: #050505; }
.sep { width: 1px; height: 29px; margin: 5px 6px 0 7px; background: #8b4936; flex: none; }
</style>
